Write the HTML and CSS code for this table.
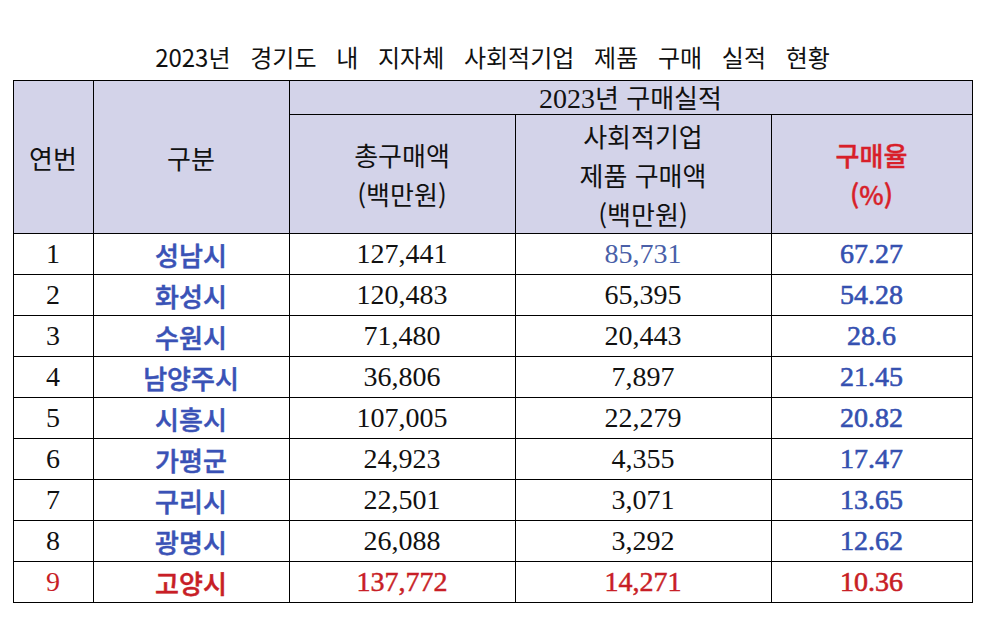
FILE: index.html
```html
<!DOCTYPE html>
<html lang="ko">
<head>
<meta charset="utf-8">
<title>2023년 경기도 내 지자체 사회적기업 제품 구매 실적 현황</title>
<link rel="stylesheet" href="styles.css">
</head>
<body>
<div class="page">
  <h1 class="title">2023년 경기도 내 지자체 사회적기업 제품 구매 실적 현황</h1>
  <table class="report">
    <colgroup>
      <col class="c-no"><col class="c-name"><col class="c-total"><col class="c-social"><col class="c-rate">
    </colgroup>
    <thead>
      <tr class="h1">
        <th rowspan="2" class="hd">연번</th>
        <th rowspan="2" class="hd">구분</th>
        <th colspan="3" class="hd group"><span class="num">2023</span>년 구매실적</th>
      </tr>
      <tr class="h2">
        <th class="hd">총구매액<br>(백만원)</th>
        <th class="hd">사회적기업<br>제품 구매액<br>(백만원)</th>
        <th class="hd red">구매율<br>(%)</th>
      </tr>
    </thead>
    <tbody>
      <tr><td class="num">1</td><td class="city">성남시</td><td class="num">127,441</td><td class="num soft">85,731</td><td class="num rate">67.27</td></tr>
      <tr><td class="num">2</td><td class="city">화성시</td><td class="num">120,483</td><td class="num">65,395</td><td class="num rate">54.28</td></tr>
      <tr><td class="num">3</td><td class="city">수원시</td><td class="num">71,480</td><td class="num">20,443</td><td class="num rate">28.6</td></tr>
      <tr><td class="num">4</td><td class="city">남양주시</td><td class="num">36,806</td><td class="num">7,897</td><td class="num rate">21.45</td></tr>
      <tr><td class="num">5</td><td class="city">시흥시</td><td class="num">107,005</td><td class="num">22,279</td><td class="num rate">20.82</td></tr>
      <tr><td class="num">6</td><td class="city">가평군</td><td class="num">24,923</td><td class="num">4,355</td><td class="num rate">17.47</td></tr>
      <tr><td class="num">7</td><td class="city">구리시</td><td class="num">22,501</td><td class="num">3,071</td><td class="num rate">13.65</td></tr>
      <tr><td class="num">8</td><td class="city">광명시</td><td class="num">26,088</td><td class="num">3,292</td><td class="num rate">12.62</td></tr>
      <tr class="hl"><td class="num">9</td><td class="city">고양시</td><td class="num strong">137,772</td><td class="num strong">14,271</td><td class="num rate">10.36</td></tr>
    </tbody>
  </table>
</div>
</body>
</html>
```

FILE: styles.css
```css
html, body {
  margin: 0;
  padding: 0;
  background: #ffffff;
}

.page {
  display: flex;
  flex-direction: column;
  align-items: center;
  padding-top: 40px;
}

.title {
  margin: 0 6px 6px 0;
  font-family: "Noto Sans CJK KR", sans-serif;
  font-weight: 400;
  font-size: 24px;
  line-height: 34px;
  word-spacing: 13px;
  color: #111;
}

.report {
  border-collapse: collapse;
  table-layout: fixed;
  width: 959px;
  margin: 0 6px 0 0;
}

.c-no { width: 80px; }
.c-name { width: 196px; }
.c-total { width: 226px; }
.c-social { width: 256px; }
.c-rate { width: 201px; }

.report th, .report td {
  border: 1.5px solid #000;
  padding: 0;
  text-align: center;
  vertical-align: middle;
}

.hd {
  background: #d3d3e9;
  font-family: "Noto Sans CJK KR", sans-serif;
  font-weight: 400;
  font-size: 26px;
  line-height: 39px;
  color: #111;
}

.h1 .group {
  height: 31px;
  line-height: 31px;
}

.h1 .group .num {
  font-family: "Liberation Serif", serif;
  font-size: 28px;
}

.h2 .hd {
  height: 118px;
}

.hd.red {
  color: #d81f2a;
  font-weight: 500;
  -webkit-text-stroke: 0.4px currentColor;
}

.report tbody td {
  height: 40px;
}

.num {
  font-family: "Liberation Serif", serif;
  font-size: 28px;
  color: #111;
}

.city {
  font-family: "Noto Sans CJK KR", sans-serif;
  font-weight: 500;
  font-size: 26px;
  color: #3a52b6;
  -webkit-text-stroke: 0.5px currentColor;
}

.soft {
  color: #4a5fa8;
}

.rate {
  color: #3550b0;
  -webkit-text-stroke: 0.6px currentColor;
}

.strong {
  -webkit-text-stroke: 0.5px currentColor;
}

.hl td, .hl .city, .hl .rate {
  color: #c81e26;
}
```
